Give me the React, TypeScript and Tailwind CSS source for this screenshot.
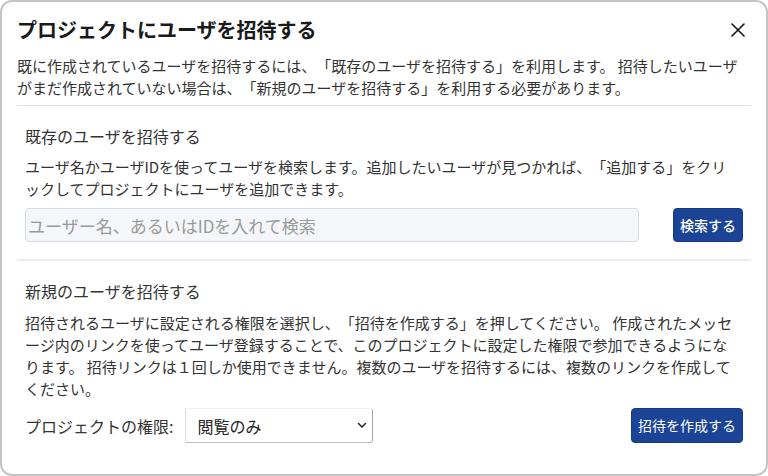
import React from "react";

export default function App() {
  return (
    <div
      className="w-[768px] h-[476px] box-border border-2 border-[#c4c4c4] rounded-[12px] bg-white px-[15px] pt-[14px] text-[#333] overflow-hidden [text-spacing-trim:space-all]"
      style={{ fontFamily: '"Noto Sans CJK JP", "Noto Sans", sans-serif' }}
    >
      <div className="flex items-center justify-between h-[28px]">
        <h1 className="text-[20px] leading-[28px] font-bold text-[#1a1a1a]">
          プロジェクトにユーザを招待する
        </h1>
        <button className="w-[20px] h-[20px] flex items-center justify-center mr-[3px]">
          <svg width="14" height="14" viewBox="0 0 14 14" fill="none">
            <path d="M1 1L13 13M13 1L1 13" stroke="#111" strokeWidth="1.6" strokeLinecap="round" />
          </svg>
        </button>
      </div>
      <p className="mt-[11px] text-[15px] leading-[22px]">
        既に作成されているユーザを招待するには、「既存のユーザを招待する」を利用します。 招待したいユーザがまだ作成されていない場合は、「新規のユーザを招待する」を利用する必要があります。
      </p>
      <div className="mt-[6px] border-t border-[#e2e2e2]" />

      <section className="px-[8px]">
        <h2 className="mt-[18px] text-[16px] leading-[24px]">既存のユーザを招待する</h2>
        <p className="mt-[8px] mr-[6px] text-[15px] leading-[22px]">
          ユーザ名かユーザIDを使ってユーザを検索します。追加したいユーザが見つかれば、「追加する」をクリックしてプロジェクトにユーザを追加できます。
        </p>
        <div className="mt-[8px] flex items-center justify-between">
          <input
            className="w-[614px] h-[34px] box-border bg-[#f4f6f9] border border-[#d3dbe6] rounded-[4px] px-[2px] text-[17px] placeholder:text-[#9a9a9a] outline-none"
            placeholder="ユーザー名、あるいはIDを入れて検索"
          />
          <button className="w-[70px] h-[34px] bg-[#1b4496] text-white text-[14px] font-medium rounded-[4px] border border-[#163a82]">
            検索する
          </button>
        </div>
      </section>
      <div className="mt-[17px] border-t-2 border-[#ececec]" />

      <section className="px-[8px]">
        <h2 className="mt-[18px] text-[16px] leading-[24px]">新規のユーザを招待する</h2>
        <p className="mt-[9px] mr-[6px] text-[15px] leading-[22px]">
          招待されるユーザに設定される権限を選択し、「招待を作成する」を押してください。 作成されたメッセージ内のリンクを使ってユーザ登録することで、このプロジェクトに設定した権限で参加できるようになります。 招待リンクは１回しか使用できません。複数のユーザを招待するには、複数のリンクを作成してください。
        </p>
        <div className="mt-[8px] flex items-center justify-between">
          <div className="flex items-center">
            <span className="text-[16px] leading-[24px]">プロジェクトの権限:</span>
            <div className="ml-[12px] w-[188px] h-[35px] box-border flex items-center justify-between pl-[11px] pr-[5px] border-l border-l-[#dcdcdc] border-t border-t-[#f0f0f0] border-r border-r-[#a8a8a8] border-b border-b-[#bdbdbd] rounded-r-[3px]">
              <span className="text-[16px] text-[#222]">閲覧のみ</span>
              <svg width="10" height="7" viewBox="0 0 10 7" fill="none">
                <path d="M1.5 1.5L5 5L8.5 1.5" stroke="#222" strokeWidth="1.5" strokeLinecap="round" strokeLinejoin="round" />
              </svg>
            </div>
          </div>
          <button className="w-[112px] h-[35px] bg-[#1b4496] text-white text-[14px] rounded-[4px] border border-[#163a82]">
            招待を作成する
          </button>
        </div>
      </section>
    </div>
  );
}
